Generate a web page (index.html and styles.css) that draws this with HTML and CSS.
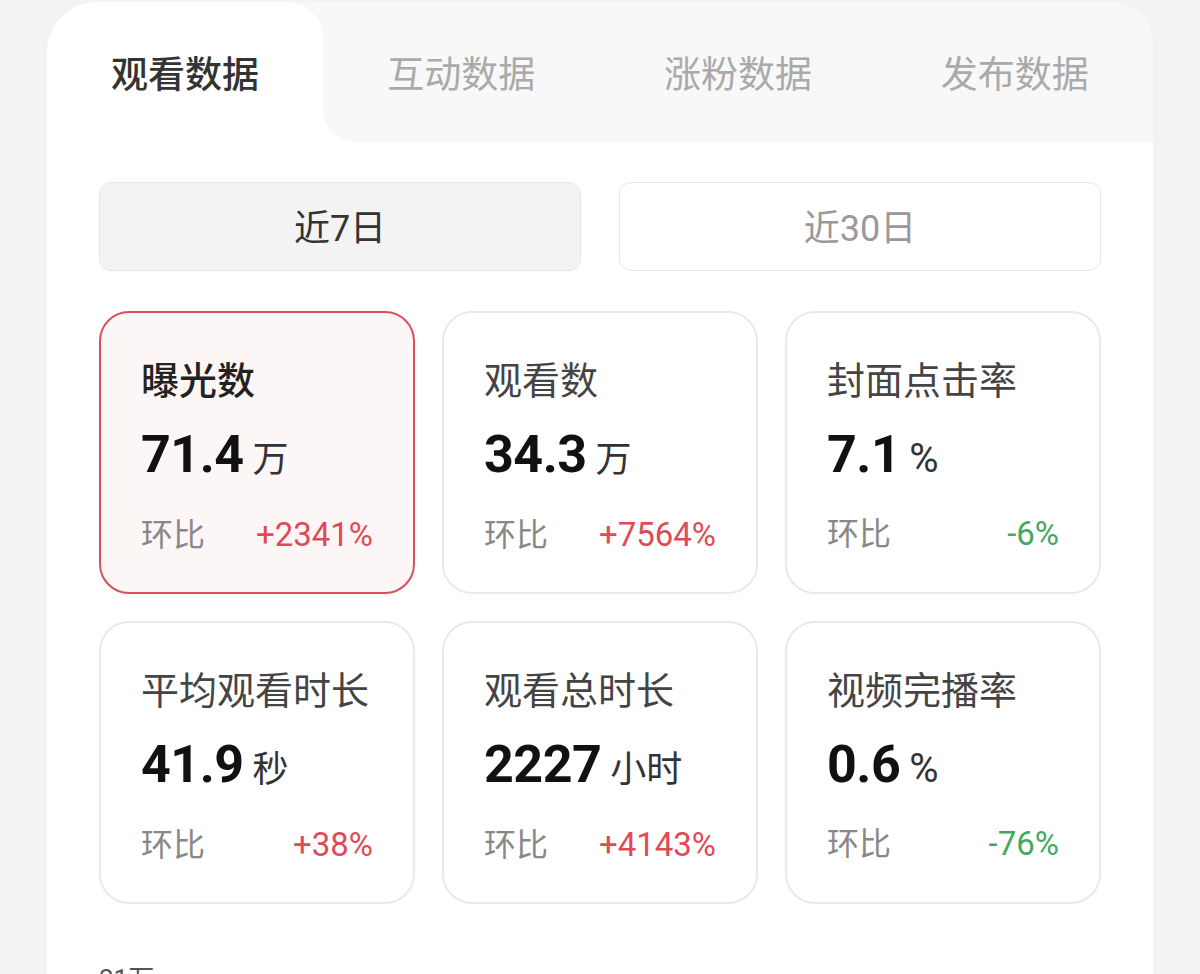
FILE: index.html
```html
<!DOCTYPE html>
<html>
<head>
  <meta charset="UTF-8">
  <meta name="viewport" content="width=device-width, initial-scale=1">
  <link rel="stylesheet" href="styles.css">
</head>
<body>
  <div class="panel">
    <div class="tabs">
      <div class="tab active">观看数据</div>
      <div class="tab-rest">
        <div class="tab">互动数据</div>
        <div class="tab">涨粉数据</div>
        <div class="tab">发布数据</div>
      </div>
    </div>

    <div class="content">
      <div class="range">
        <button class="range-btn on">近7日</button>
        <button class="range-btn">近30日</button>
      </div>

      <div class="cards">
        <div class="card selected">
          <div class="card-name strong">曝光数</div>
          <div class="card-value"><span class="num">71.4</span><span class="unit">万</span></div>
          <div class="card-foot"><span>环比</span><span class="up">+2341%</span></div>
        </div>
        <div class="card">
          <div class="card-name">观看数</div>
          <div class="card-value"><span class="num">34.3</span><span class="unit">万</span></div>
          <div class="card-foot"><span>环比</span><span class="up">+7564%</span></div>
        </div>
        <div class="card">
          <div class="card-name">封面点击率</div>
          <div class="card-value"><span class="num">7.1</span><span class="unit pct">%</span></div>
          <div class="card-foot"><span>环比</span><span class="down">-6%</span></div>
        </div>
        <div class="card">
          <div class="card-name">平均观看时长</div>
          <div class="card-value"><span class="num">41.9</span><span class="unit">秒</span></div>
          <div class="card-foot"><span>环比</span><span class="up">+38%</span></div>
        </div>
        <div class="card">
          <div class="card-name">观看总时长</div>
          <div class="card-value"><span class="num">2227</span><span class="unit">小时</span></div>
          <div class="card-foot"><span>环比</span><span class="up">+4143%</span></div>
        </div>
        <div class="card">
          <div class="card-name">视频完播率</div>
          <div class="card-value"><span class="num">0.6</span><span class="unit pct">%</span></div>
          <div class="card-foot"><span>环比</span><span class="down">-76%</span></div>
        </div>
      </div>

      <div class="axis-label">21万</div>
    </div>
  </div>
</body>
</html>
```

FILE: styles.css
```css
body {
  margin: 0;
  background: #f3f3f3;
  font-family: Roboto, "Noto Sans CJK SC", sans-serif;
  color: #333;
  height: 974px;
  overflow: hidden;
}

.panel {
  margin: 2px 0 0 47px;
  width: 1106px;
  height: 972px;
  background: #fff;
  border-radius: 50px 42px 0 0;
  overflow: hidden;
}

/* top tabs: grey strip with the active tab cut out of it */
.tabs {
  display: flex;
  height: 140px;
  background: linear-gradient(#f8f8f8 50%, #fff 50%);
}

.tab {
  flex: 1;
  display: flex;
  align-items: center;
  justify-content: center;
  font-size: 37px;
  color: #aaa;
  font-family: "Noto Sans CJK SC", sans-serif;
}

.tab.active {
  flex: 0 0 276px;
  background: #fff;
  color: #333;
  font-weight: 500;
  border-radius: 50px 36px 0 0;
}

.tab-rest {
  flex: 1;
  display: flex;
  background: #f8f8f8;
  border-bottom-left-radius: 32px;
}

.content {
  padding: 40px 52px 0;
}

.range {
  display: flex;
  gap: 38px;
}

.range-btn {
  flex: 1;
  height: 89px;
  padding: 0 0 4px;
  border: 1px solid #e6e6e6;
  border-radius: 12px;
  background: #fff;
  font-family: Roboto, "Noto Sans CJK SC", sans-serif;
  font-size: 36px;
  color: #999;
}

.range-btn.on {
  background: #f3f3f3;
  color: #333;
}

.cards {
  margin-top: 40px;
  display: grid;
  grid-template-columns: repeat(3, 1fr);
  gap: 27px;
}

.card {
  height: 283px;
  box-sizing: border-box;
  border: 2px solid #e9e9e9;
  border-radius: 30px;
  padding: 43px 40px 0;
  display: flex;
  flex-direction: column;
}

.card.selected {
  border-color: #d9505c;
  background: #fdf6f6;
}

.card-name {
  font-family: "Noto Sans CJK SC", sans-serif;
  font-size: 38px;
  line-height: 44px;
  color: #444;
}

.card-name.strong {
  color: #222;
  font-weight: 500;
}

.card-value {
  margin-top: 25px;
  display: flex;
  align-items: baseline;
  gap: 9px;
  line-height: 60px;
}

.num {
  font-size: 52px;
  font-weight: 700;
  letter-spacing: -0.5px;
  color: #111;
}

.unit {
  font-size: 36px;
  color: #333;
}

.unit.pct {
  font-size: 40px;
}

.card-foot {
  margin-top: 25px;
  display: flex;
  justify-content: space-between;
  align-items: baseline;
  line-height: 40px;
  font-size: 32px;
  color: #888;
}

.up,
.down {
  font-size: 33px;
}

.up {
  color: #e04a57;
}

.down {
  color: #45a85f;
}

.axis-label {
  margin-top: 54px;
  font-size: 26px;
  color: #555;
}
```
